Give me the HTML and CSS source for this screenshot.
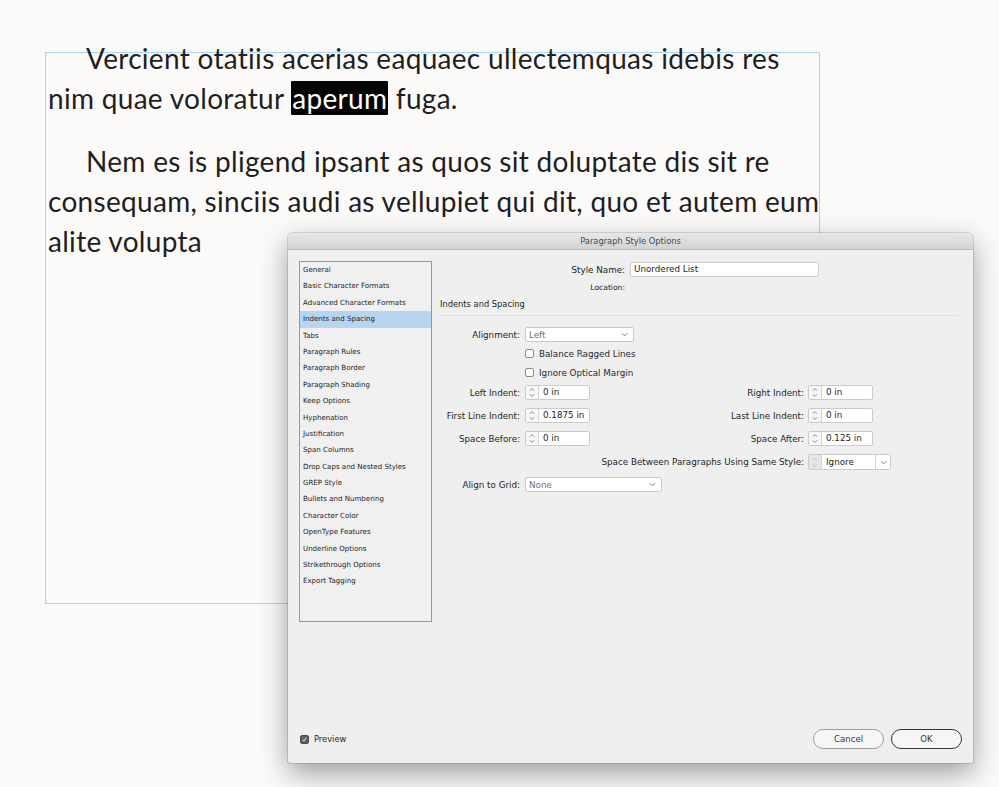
FILE: index.html
```html
<!DOCTYPE html>
<html>
<head>
<meta charset="utf-8">
<title>Paragraph Style Options</title>
<link rel="stylesheet" href="styles.css">
</head>
<body>
<div class="frame">
  <p class="para first">Vercient otatiis acerias eaquaec ullectemquas idebis res<br>nim quae voloratur <span class="sel">aperum</span> fuga.</p>
  <p class="para second">Nem es is pligend ipsant as quos sit doluptate dis sit re<br>consequam, sinciis audi as vellupiet qui dit, quo et autem eum<br>alite volupta</p>
</div>

<div class="dialog">
  <div class="titlebar">Paragraph Style Options</div>
  <div class="dbody">
    <div class="top">
      <ul class="cats">
        <li>General</li>
        <li>Basic Character Formats</li>
        <li>Advanced Character Formats</li>
        <li class="active">Indents and Spacing</li>
        <li>Tabs</li>
        <li>Paragraph Rules</li>
        <li>Paragraph Border</li>
        <li>Paragraph Shading</li>
        <li>Keep Options</li>
        <li>Hyphenation</li>
        <li>Justification</li>
        <li>Span Columns</li>
        <li>Drop Caps and Nested Styles</li>
        <li>GREP Style</li>
        <li>Bullets and Numbering</li>
        <li>Character Color</li>
        <li>OpenType Features</li>
        <li>Underline Options</li>
        <li>Strikethrough Options</li>
        <li>Export Tagging</li>
      </ul>
      <div class="form">
        <div class="row r-style">
          <span class="lbl lbl-style">Style Name:</span>
          <span class="textfield">Unordered List</span>
        </div>
        <div class="row r-loc">
          <span class="lbl lbl-style small">Location:</span>
        </div>
        <div class="heading">Indents and Spacing</div>
        <div class="sep"></div>

        <div class="row r-align">
          <span class="lbl lbl-left">Alignment:</span>
          <span class="select sel-align"><span class="val dim">Left</span><svg class="chev" viewBox="0 0 8 5"><path d="M1 1 L4 4 L7 1"/></svg></span>
        </div>
        <div class="row r-check c1">
          <span class="box"></span><span class="cklabel">Balance Ragged Lines</span>
        </div>
        <div class="row r-check c2">
          <span class="box"></span><span class="cklabel">Ignore Optical Margin</span>
        </div>

        <div class="row r-spin s1">
          <span class="lbl lbl-left">Left Indent:</span>
          <span class="spin"><span class="arrows"><svg viewBox="0 0 12 15"><path d="M3.5 5.5 L6 3 L8.5 5.5 M3.5 9.5 L6 12 L8.5 9.5"/></svg></span><span class="val">0 in</span></span>
          <span class="lbl lbl-right">Right Indent:</span>
          <span class="spin"><span class="arrows"><svg viewBox="0 0 12 15"><path d="M3.5 5.5 L6 3 L8.5 5.5 M3.5 9.5 L6 12 L8.5 9.5"/></svg></span><span class="val">0 in</span></span>
        </div>
        <div class="row r-spin s2">
          <span class="lbl lbl-left">First Line Indent:</span>
          <span class="spin"><span class="arrows"><svg viewBox="0 0 12 15"><path d="M3.5 5.5 L6 3 L8.5 5.5 M3.5 9.5 L6 12 L8.5 9.5"/></svg></span><span class="val">0.1875 in</span></span>
          <span class="lbl lbl-right">Last Line Indent:</span>
          <span class="spin"><span class="arrows"><svg viewBox="0 0 12 15"><path d="M3.5 5.5 L6 3 L8.5 5.5 M3.5 9.5 L6 12 L8.5 9.5"/></svg></span><span class="val">0 in</span></span>
        </div>
        <div class="row r-spin s2">
          <span class="lbl lbl-left">Space Before:</span>
          <span class="spin"><span class="arrows"><svg viewBox="0 0 12 15"><path d="M3.5 5.5 L6 3 L8.5 5.5 M3.5 9.5 L6 12 L8.5 9.5"/></svg></span><span class="val">0 in</span></span>
          <span class="lbl lbl-right">Space After:</span>
          <span class="spin"><span class="arrows"><svg viewBox="0 0 12 15"><path d="M3.5 5.5 L6 3 L8.5 5.5 M3.5 9.5 L6 12 L8.5 9.5"/></svg></span><span class="val">0.125 in</span></span>
        </div>
        <div class="row r-spin s3 r-between">
          <span class="lbl lbl-between">Space Between Paragraphs Using Same Style:</span>
          <span class="combo"><span class="arrows disabled"><svg viewBox="0 0 12 15"><path d="M3.5 5.5 L6 3 L8.5 5.5 M3.5 9.5 L6 12 L8.5 9.5"/></svg></span><span class="val">Ignore</span><span class="drop"><svg class="chev" viewBox="0 0 8 5"><path d="M1 1 L4 4 L7 1"/></svg></span></span>
        </div>
        <div class="row r-spin s3">
          <span class="lbl lbl-left">Align to Grid:</span>
          <span class="select sel-grid"><span class="val dim">None</span><svg class="chev" viewBox="0 0 8 5"><path d="M1 1 L4 4 L7 1"/></svg></span>
        </div>
      </div>
    </div>
    <div class="footer">
      <span class="box checked"><svg viewBox="0 0 9 9"><path d="M2 4.6 L3.8 6.6 L7 2.2"/></svg></span>
      <span class="preview">Preview</span>
      <span class="btn cancel">Cancel</span>
      <span class="btn ok">OK</span>
    </div>
  </div>
</div>
</body>
</html>
```
FILE: styles.css
```css
html, body {
  margin: 0;
  padding: 0;
}
body {
  width: 999px;
  height: 787px;
  overflow: hidden;
  position: relative;
  background: #fcfaf9;
}

/* text frame */
.frame {
  margin: 52px 0 0 45px;
  width: 773px;
  height: 550px;
  border: 1px solid #a8d4f6;
}
.para {
  margin: 0;
  padding-left: 2px;
  font-family: Lato, "Open Sans", sans-serif;
  font-size: 28px;
  line-height: 40px;
  letter-spacing: 0.3px;
  color: #1f1f1f;
  text-indent: 38px;
  white-space: nowrap;
}
.para.first { margin-top: -15px; }
.para.second { margin-top: 23px; }
.sel {
  background: #050505;
  color: #ffffff;
  border-radius: 1px;
  padding: 0 1px;
}

/* dialog */
.dialog {
  position: absolute;
  left: 288px;
  top: 233px;
  width: 685px;
  height: 530px;
  background: #efefef;
  border-radius: 5px 5px 2px 2px;
  box-shadow: 0 10px 28px rgba(0, 0, 0, 0.38), 0 0 0 1px rgba(0, 0, 0, 0.12);
  display: flex;
  flex-direction: column;
  font-family: "DejaVu Sans", sans-serif;
  color: #1e1e1e;
  overflow: hidden;
}
.titlebar {
  height: 16px;
  line-height: 17px;
  background: linear-gradient(#e7e7e7, #d3d3d3);
  border-bottom: 1px solid #bcbcbc;
  text-align: center;
  font-size: 8.3px;
  color: #4b4b4b;
}
.dbody {
  flex: 1;
  display: flex;
  flex-direction: column;
  padding: 11px 11px 14px 11px;
}
.top {
  display: flex;
}
.cats {
  list-style: none;
  margin: 0;
  padding: 0;
  width: 131px;
  height: 359px;
  border: 1px solid #6b9fe0;
  background: #f0f0f0;
  font-size: 7.05px;
}
.cats li {
  height: 16.4px;
  line-height: 16.4px;
  padding-left: 3px;
  white-space: nowrap;
}
.cats li.active {
  background: #b7d4f1;
}

.form {
  margin-left: 8px;
  margin-top: 1px;
  width: 518px;
  display: flex;
  flex-direction: column;
  font-size: 8.75px;
}
.row {
  display: flex;
  align-items: center;
  height: 15px;
}
.lbl {
  text-align: right;
  white-space: nowrap;
}
.lbl-style { width: 185px; margin-right: 5px; }
.lbl-left { width: 80px; margin-right: 5px; }
.lbl-right { width: 214px; margin-right: 4px; }
.lbl-between { width: 364px; margin-right: 4px; }
.small { font-size: 7.6px; }

.textfield {
  box-sizing: border-box;
  width: 189px;
  height: 15px;
  line-height: 13px;
  padding-left: 3px;
  background: #fff;
  border: 1px solid #cdcdcd;
  border-radius: 2px;
}
.r-loc { margin-top: 4px; height: 12px; }
.heading {
  margin-top: 5px;
  height: 12px;
  line-height: 12px;
  font-size: 8.3px;
}
.sep {
  margin-top: 5px;
  height: 0;
  border-top: 1px solid #e1e1e1;
}

.r-align { margin-top: 11px; }
.select {
  box-sizing: border-box;
  height: 15px;
  background: #fff;
  border: 1px solid #c9c9c9;
  border-radius: 2px;
  display: flex;
  align-items: center;
  justify-content: space-between;
  padding: 0 5px 0 3px;
}
.sel-align { width: 109px; }
.sel-grid { width: 137px; }
.dim { color: #6f6f6f; }
.chev {
  width: 7px;
  height: 5px;
  fill: none;
  stroke: #6a6a6a;
  stroke-width: 1;
}

.r-check { height: 15px; padding-left: 85px; }
.c1 { margin-top: 4px; }
.c2 { margin-top: 4px; }
.box {
  box-sizing: border-box;
  width: 9px;
  height: 9px;
  border: 1px solid #8a8a8a;
  border-radius: 2px;
  background: #fff;
  margin-right: 5px;
  display: inline-block;
}
.cklabel { color: #2a2a2a; }

.s1 { margin-top: 5px; }
.s2 { margin-top: 8px; }
.s3 { margin-top: 8px; }
.r-between { height: 16px; }
.r-between + .s3 { margin-top: 7px; }

.spin, .combo {
  box-sizing: border-box;
  height: 15px;
  width: 65px;
  display: flex;
  align-items: stretch;
  background: #fff;
  border: 1px solid #cbcbcb;
  border-radius: 2px;
}
.arrows {
  width: 12px;
  border-right: 1px solid #d4d4d4;
  background: #f7f7f7;
  display: flex;
  align-items: center;
}
.arrows svg {
  width: 12px;
  height: 13px;
  fill: none;
  stroke: #707070;
  stroke-width: 0.9;
}
.arrows.disabled { background: #e6e6e6; }
.arrows.disabled svg { stroke: #b4b4b4; }
.spin .val, .combo .val {
  line-height: 13px;
  padding-left: 4px;
  flex: 1;
  white-space: nowrap;
}
.combo { width: 83px; height: 16px; }
.combo .val { line-height: 14px; }
.drop {
  width: 14px;
  border-left: 1px solid #d4d4d4;
  display: flex;
  align-items: center;
  justify-content: center;
}

/* footer */
.footer {
  margin-top: auto;
  display: flex;
  align-items: center;
  padding-left: 1px;
}
.footer .box { margin-right: 5px; }
.box.checked {
  background: #5d5d5d;
  border-color: #4d4d4d;
  display: flex;
  align-items: center;
  justify-content: center;
}
.box.checked svg {
  width: 9px;
  height: 9px;
  fill: none;
  stroke: #ffffff;
  stroke-width: 1.2;
}
.preview {
  font-size: 8.3px;
  color: #2a2a2a;
}
.btn {
  box-sizing: border-box;
  width: 71px;
  height: 20px;
  border-radius: 10px;
  display: flex;
  align-items: center;
  justify-content: center;
  font-size: 8.6px;
  color: #3a3a3a;
  background: #f6f6f6;
}
.cancel {
  margin-left: auto;
  border: 1px solid #9c9c9c;
}
.ok {
  margin-left: 7px;
  border: 1.5px solid #333333;
}
```
